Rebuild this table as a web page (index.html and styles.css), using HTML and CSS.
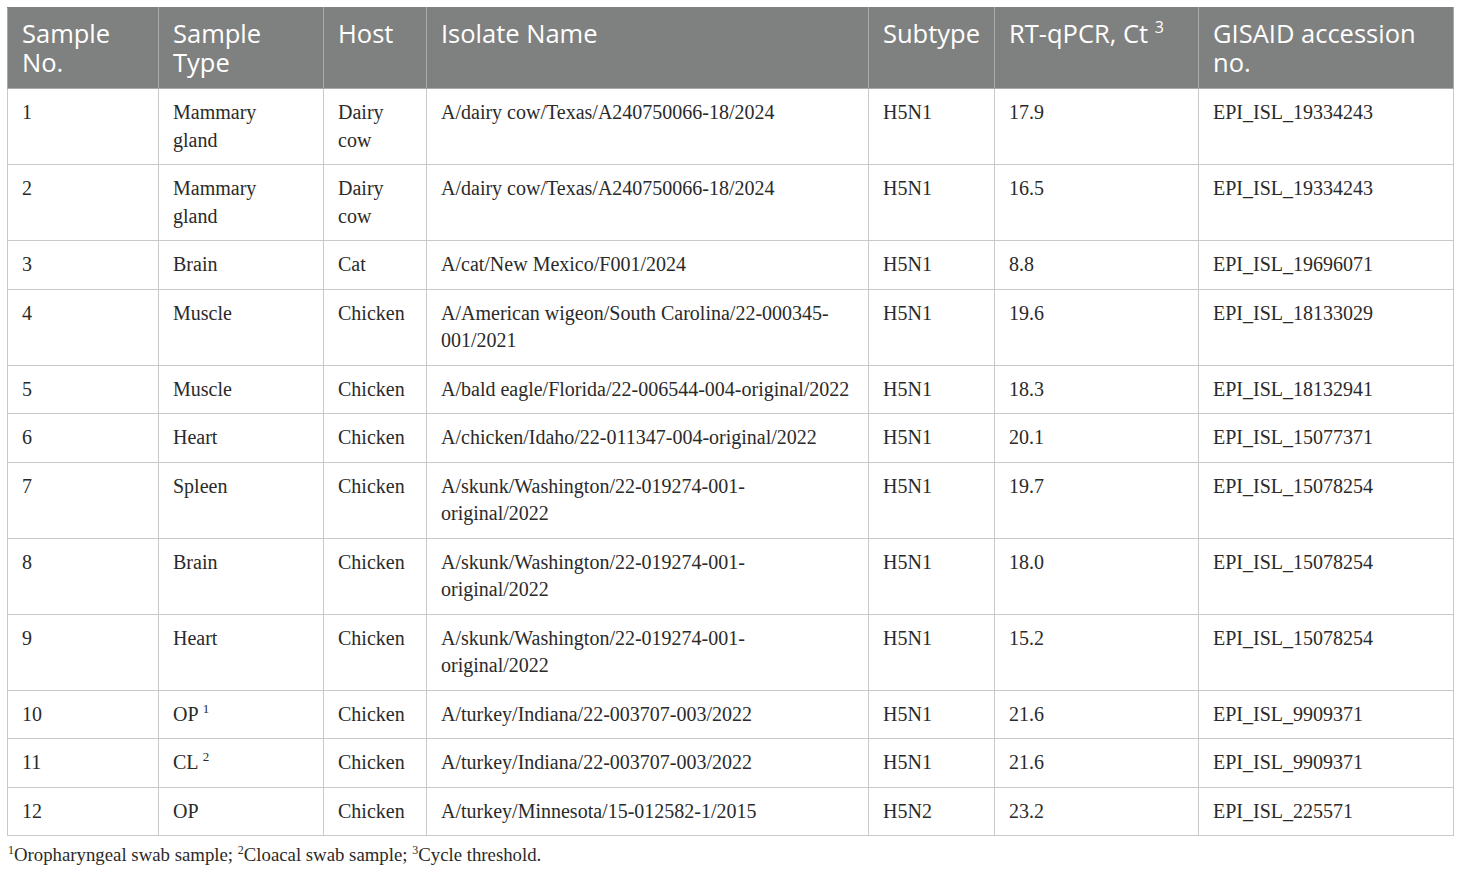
FILE: index.html
```html
<!DOCTYPE html>
<html>
<head>
<meta charset="utf-8">
<link rel="stylesheet" href="styles.css">
</head>
<body>
<div class="wrap">
<table class="data">
<colgroup>
<col class="c1"><col class="c2"><col class="c3"><col class="c4"><col class="c5"><col class="c6"><col class="c7">
</colgroup>
<thead>
<tr>
<th>Sample No.</th><th>Sample Type</th><th>Host</th><th>Isolate Name</th><th>Subtype</th><th>RT-qPCR, Ct <sup>3</sup></th><th>GISAID accession no.</th>
</tr>
</thead>
<tbody>
<tr><td>1</td><td>Mammary<br>gland</td><td>Dairy cow</td><td>A/dairy cow/Texas/A240750066-18/2024</td><td>H5N1</td><td>17.9</td><td>EPI_ISL_19334243</td></tr>
<tr><td>2</td><td>Mammary<br>gland</td><td>Dairy cow</td><td>A/dairy cow/Texas/A240750066-18/2024</td><td>H5N1</td><td>16.5</td><td>EPI_ISL_19334243</td></tr>
<tr><td>3</td><td>Brain</td><td>Cat</td><td>A/cat/New Mexico/F001/2024</td><td>H5N1</td><td>8.8</td><td>EPI_ISL_19696071</td></tr>
<tr><td>4</td><td>Muscle</td><td>Chicken</td><td>A/American wigeon/South Carolina/22-000345-001/2021</td><td>H5N1</td><td>19.6</td><td>EPI_ISL_18133029</td></tr>
<tr><td>5</td><td>Muscle</td><td>Chicken</td><td>A/bald eagle/Florida/22-006544-004-original/2022</td><td>H5N1</td><td>18.3</td><td>EPI_ISL_18132941</td></tr>
<tr><td>6</td><td>Heart</td><td>Chicken</td><td>A/chicken/Idaho/22-011347-004-original/2022</td><td>H5N1</td><td>20.1</td><td>EPI_ISL_15077371</td></tr>
<tr><td>7</td><td>Spleen</td><td>Chicken</td><td>A/skunk/Washington/22-019274-001-<br>original/2022</td><td>H5N1</td><td>19.7</td><td>EPI_ISL_15078254</td></tr>
<tr><td>8</td><td>Brain</td><td>Chicken</td><td>A/skunk/Washington/22-019274-001-<br>original/2022</td><td>H5N1</td><td>18.0</td><td>EPI_ISL_15078254</td></tr>
<tr><td>9</td><td>Heart</td><td>Chicken</td><td>A/skunk/Washington/22-019274-001-<br>original/2022</td><td>H5N1</td><td>15.2</td><td>EPI_ISL_15078254</td></tr>
<tr><td>10</td><td>OP <sup>1</sup></td><td>Chicken</td><td>A/turkey/Indiana/22-003707-003/2022</td><td>H5N1</td><td>21.6</td><td>EPI_ISL_9909371</td></tr>
<tr><td>11</td><td>CL <sup>2</sup></td><td>Chicken</td><td>A/turkey/Indiana/22-003707-003/2022</td><td>H5N1</td><td>21.6</td><td>EPI_ISL_9909371</td></tr>
<tr><td>12</td><td>OP</td><td>Chicken</td><td>A/turkey/Minnesota/15-012582-1/2015</td><td>H5N2</td><td>23.2</td><td>EPI_ISL_225571</td></tr>
</tbody>
</table>
<p class="foot"><sup>1</sup>Oropharyngeal swab sample; <sup>2</sup>Cloacal swab sample; <sup>3</sup>Cycle threshold.</p>
</div>
</body>
</html>
```
FILE: styles.css
```css
html, body {
  margin: 0;
  padding: 0;
  background: #ffffff;
}
.wrap {
  padding: 7px 7px 0 7px;
}
.data {
  width: 1446px;
  border-collapse: collapse;
  table-layout: fixed;
}
.c1 { width: 151px; }
.c2 { width: 165px; }
.c3 { width: 103px; }
.c4 { width: 442px; }
.c5 { width: 126px; }
.c6 { width: 204px; }
.c7 { width: 255px; }
.data th {
  background: #7f8180;
  color: #ffffff;
  font-family: "Open Sans", "Noto Sans", sans-serif;
  font-weight: 400;
  font-size: 25.5px;
  line-height: 29px;
  text-align: left;
  vertical-align: top;
  padding: 11px 14px 11px 14px;
  border: 1px solid #a9abaa;
  border-top-color: #7f8180;
}
.data th sup {
  font-size: 16px;
  line-height: 0;
  vertical-align: 10px;
}
.data td {
  font-family: "Liberation Serif", "Times New Roman", serif;
  font-size: 20px;
  line-height: 27.5px;
  color: #2a2a2a;
  text-align: left;
  vertical-align: top;
  padding: 10px 14px 10px 14px;
  border: 1px solid #c9c9c9;
}
.data td sup {
  font-size: 13px;
  line-height: 0;
  vertical-align: 8px;
}
.foot {
  margin: 8px 0 0 1px;
  font-family: "Liberation Serif", "Times New Roman", serif;
  font-size: 18.8px;
  line-height: 22px;
  color: #2a2a2a;
}
.foot sup {
  font-size: 12px;
  line-height: 0;
  vertical-align: 7px;
}
```
